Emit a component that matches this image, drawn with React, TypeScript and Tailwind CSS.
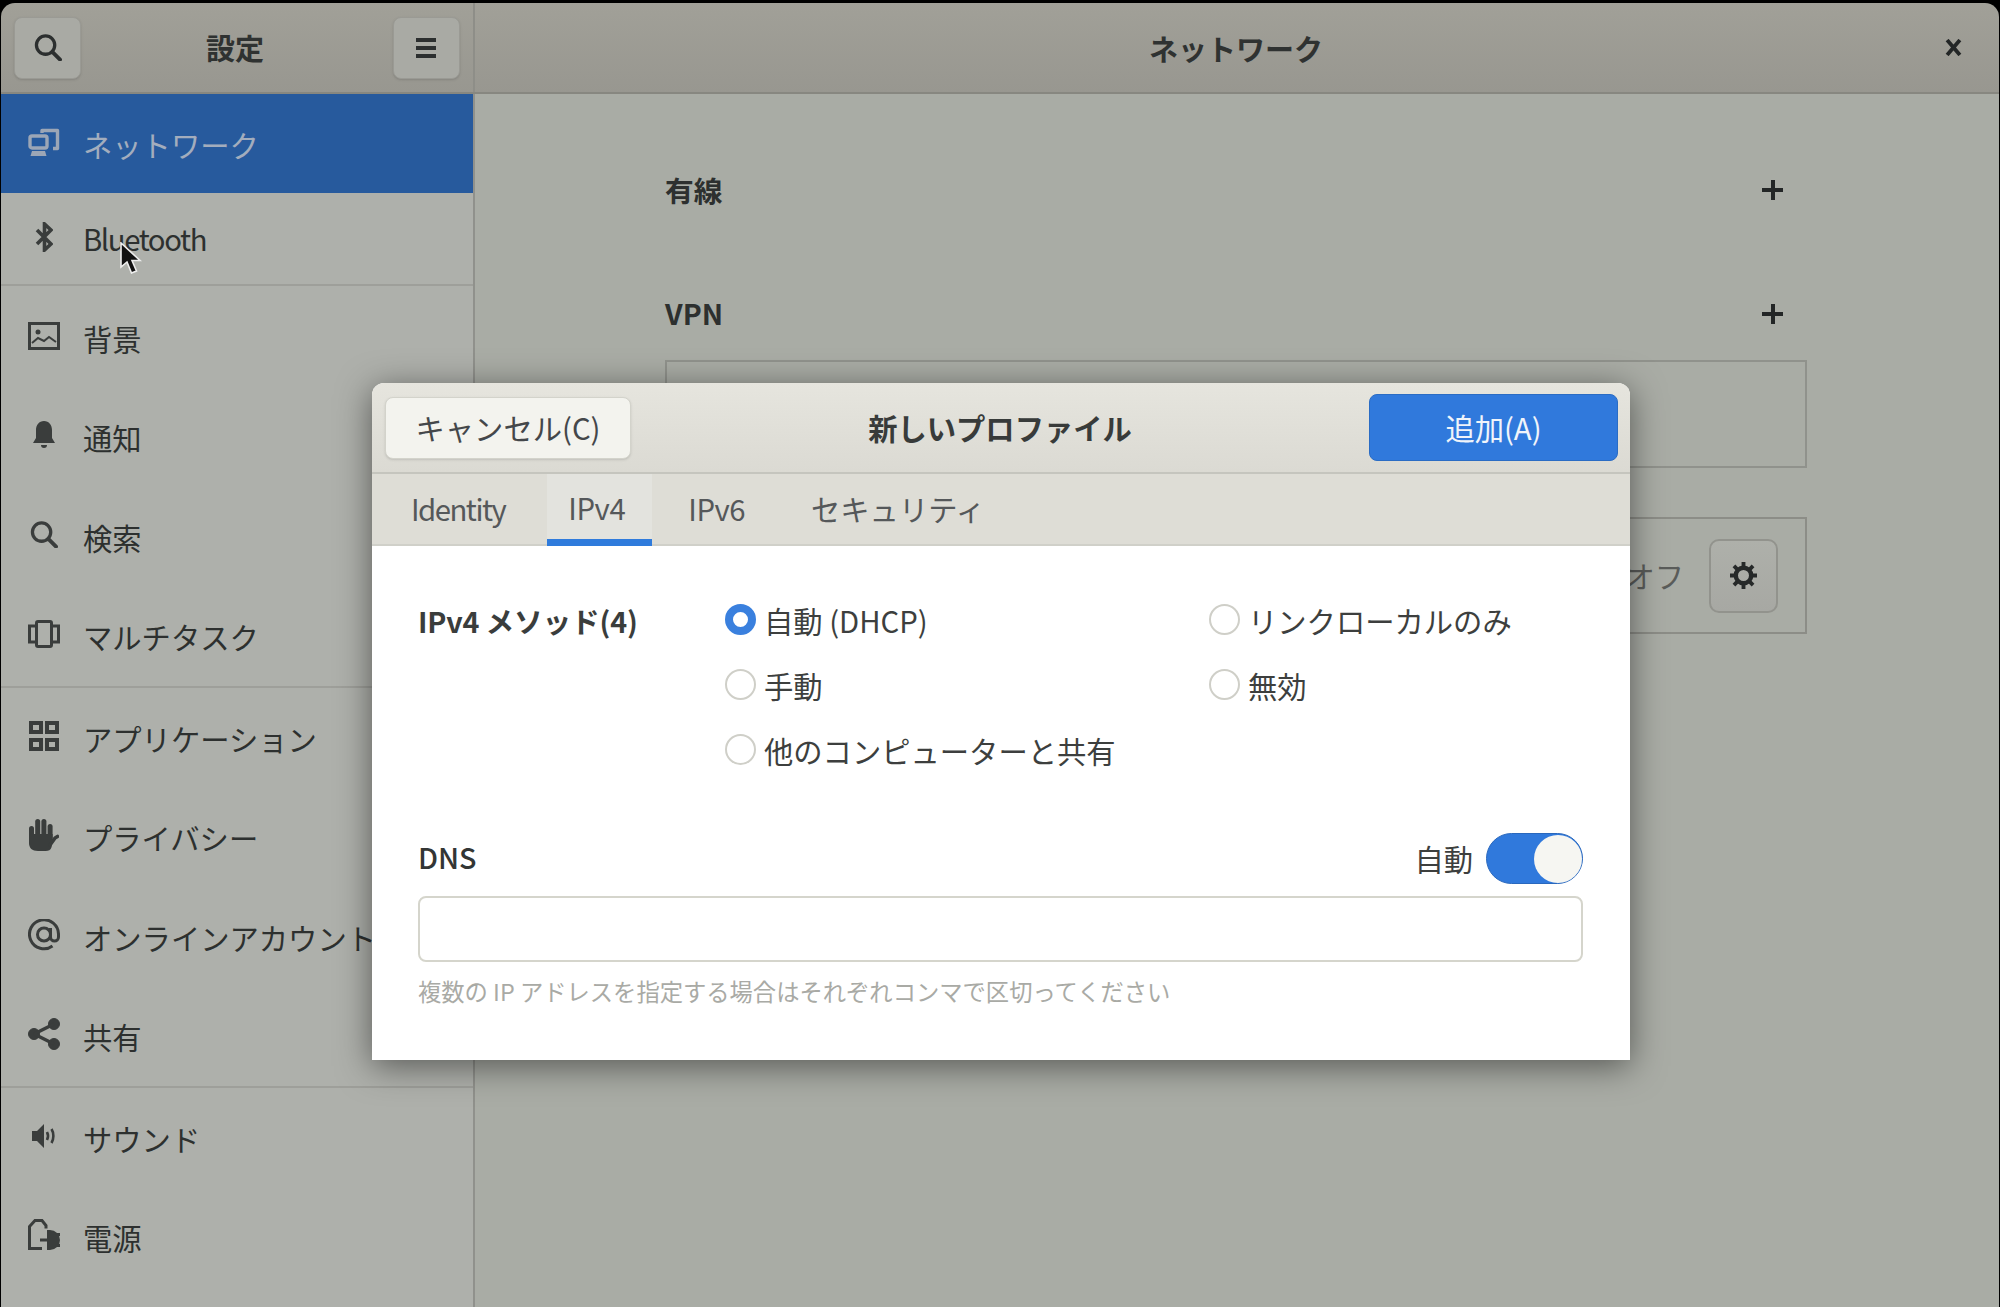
import React from "react";

type IconProps = { className?: string };

const IconNetwork = ({ className }: IconProps) => (
  <svg viewBox="0 0 32 28" className={className} fill="none" stroke="currentColor" strokeWidth="3.4">
    <path d="M14 5V2.500h15.500v18H25" strokeLinejoin="round" />
    <rect x="2" y="8" width="17" height="12" rx="2" />
    <path d="M2.500 28l1.500-5h13l1.500 5z" fill="currentColor" stroke="none" />
  </svg>
);
const IconBluetooth = ({ className }: IconProps) => (
  <svg viewBox="0 0 18 30" className={className} fill="none" stroke="currentColor" strokeWidth="3.6">
    <path d="M2 8l14 14-6.500 6V2L16 8 2 22" />
  </svg>
);
const IconImage = ({ className }: IconProps) => (
  <svg viewBox="0 0 32 28" className={className} fill="none" stroke="currentColor" strokeWidth="3">
    <rect x="1.500" y="1.500" width="29" height="25" />
    <circle cx="10" cy="10" r="2.500" fill="currentColor" stroke="none" />
    <path d="M4 21l6-5 6 3 5-4 7 5" strokeWidth="2" />
  </svg>
);
const IconBell = ({ className }: IconProps) => (
  <svg viewBox="0 0 24 30" className={className} fill="currentColor">
    <path d="M12 1c-5 0-8 4-8 9v8l-3 5h22l-3-5v-8c0-5-3-9-8-9z" />
    <path d="M9 25h6a3 3 0 01-6 0z" />
  </svg>
);
const IconSearch = ({ className }: IconProps) => (
  <svg viewBox="0 0 28 28" className={className} fill="none" stroke="currentColor" strokeWidth="3.400">
    <circle cx="11.500" cy="11.500" r="9.500" />
    <path d="M18.500 18.500l8 8" strokeLinecap="round" strokeWidth="4" />
  </svg>
);
const IconMulti = ({ className }: IconProps) => (
  <svg viewBox="0 0 32 28" className={className} fill="none" stroke="currentColor" strokeWidth="3">
    <rect x="8.500" y="1.500" width="15" height="25" rx="1.500" />
    <path d="M8 6H1.500v16H8M24 6h6.500v16H24" />
  </svg>
);
const IconApps = ({ className }: IconProps) => (
  <svg viewBox="0 0 30 30" className={className} fill="none" stroke="currentColor" strokeWidth="4">
    <rect x="2" y="2" width="10" height="9" />
    <rect x="18" y="2" width="10" height="9" />
    <rect x="2" y="19" width="10" height="9" />
    <rect x="18" y="19" width="10" height="9" />
  </svg>
);
const IconHand = ({ className }: IconProps) => (
  <svg viewBox="0 0 30 32" className={className} fill="currentColor">
    <rect x="0" y="7" width="5" height="18" rx="2.500" />
    <rect x="6.200" y="0" width="5" height="20" rx="2.500" />
    <rect x="12.400" y="0" width="5" height="20" rx="2.500" />
    <rect x="18.600" y="5" width="5" height="16" rx="2.500" />
    <path d="M0 15h23.600v6l-1 7c-1 3-3 4-6 4H9c-6 0-9-3-9-8z" />
    <path d="M21 26l5-7 2.500-1.500" fill="none" stroke="currentColor" strokeWidth="3.600" strokeLinecap="round" />
  </svg>
);
const IconAt = ({ className }: IconProps) => (
  <svg viewBox="0 0 32 32" className={className} fill="none" stroke="currentColor" strokeWidth="3">
    <circle cx="16" cy="15.500" r="6.500" />
    <path d="M22.500 9v9a4 4 0 008 0v-2.500a14.500 14.500 0 10-6 11.500" />
  </svg>
);
const IconShare = ({ className }: IconProps) => (
  <svg viewBox="0 0 32 32" className={className} fill="currentColor" stroke="currentColor">
    <circle cx="6" cy="16" r="5.500" />
    <circle cx="26" cy="6" r="5.500" />
    <circle cx="26" cy="26" r="5.500" />
    <path d="M6 16L26 6M6 16l20 10" strokeWidth="3.500" />
  </svg>
);
const IconSound = ({ className }: IconProps) => (
  <svg viewBox="0 0 24 24" className={className} fill="none" stroke="currentColor">
    <path d="M0 7h5l7-7v24l-7-7H0z" fill="currentColor" stroke="none" />
    <path d="M15 8c1.300 2.500 1.300 5.500 0 8M19.500 5c2.500 4 2.500 10 0 14" strokeWidth="2.600" />
  </svg>
);
const IconPower = ({ className }: IconProps) => (
  <svg viewBox="0 0 32 32" className={className} fill="none" stroke="currentColor" strokeWidth="3">
    <path d="M14 29.500H1.500V7.500L7 1.500h7l4 5v3" />
    <path d="M19 11h3a9.500 9.500 0 010 20h-3z" fill="currentColor" stroke="none" />
    <path d="M12 21h7M27 15.500h5M27 26.500h5" />
  </svg>
);
const IconGear = ({ className }: IconProps) => (
  <svg viewBox="0 0 28 28" className={className} fill="none" stroke="currentColor">
    <circle cx="14" cy="14" r="8" strokeWidth="4.600" />
    <path d="M14 0v5M14 23v5M0 14h5M23 14h5M4.100 4.100l3.500 3.500M23.900 4.100l-3.500 3.500M4.100 23.900l3.500-3.500M23.900 23.900l-3.500-3.500" strokeWidth="4" />
  </svg>
);

const iconBox = "flex h-[34px] w-[34px] shrink-0 -translate-y-[2px] items-center justify-center text-[#3a3d3c]";

const Row = ({ icon, label }: { icon: React.ReactNode; label: string }) => (
  <div className="flex h-[99.5px] items-center gap-[22px] pl-[26px]">
    <div className={iconBox}>{icon}</div>
    <span className="mt-[2px] whitespace-nowrap text-[29.3px] text-[#2d302f]">{label}</span>
  </div>
);

const Radio = ({ checked, label }: { checked?: boolean; label: string }) => (
  <div className="flex h-[65px] items-center gap-[8px]">
    <span
      className={
        checked
          ? "mb-[6px] h-[31px] w-[31px] shrink-0 rounded-full border-[8px] border-[#3a80de] bg-white"
          : "mb-[6px] h-[31px] w-[31px] shrink-0 rounded-full border-2 border-[#cfcfc8] bg-white"
      }
    />
    <span className="mb-[4px] whitespace-nowrap text-[29.3px] text-[#3d3f3e]">{label}</span>
  </div>
);

const Plus = ({ className }: IconProps) => (
  <span className={className}>
    <span className="absolute left-0 top-[8px] h-[4px] w-[21px] bg-[#232626]" />
    <span className="absolute left-[9px] top-0 h-[20px] w-[4px] bg-[#232626]" />
  </span>
);

export default function App() {
  return (
    <div className="relative h-[1307px] w-[2000px] overflow-hidden bg-black pl-[1px] pr-[1px] pt-[3px] font-['Noto_Sans_CJK_JP','Noto_Sans',sans-serif]">
      <div className="flex h-[1304px] flex-col overflow-hidden rounded-t-[14px]">
        <header className="flex h-[91px] shrink-0 border-b-2 border-[#878780] bg-gradient-to-b from-[#a1a098] to-[#989790]">
          <div className="flex w-[474px] shrink-0 items-center justify-between border-r-2 border-[#8e8e88] pl-[13px] pr-[13px]">
            <div className="flex h-[62px] w-[67px] items-center justify-center rounded-[8px] border border-[#9a9a94] bg-[#a9aaa4] shadow-sm">
              <IconSearch className="h-[27px] w-[28px] text-[#2c2f2f]" />
            </div>
            <span className="mr-[4px] pt-[1px] text-[29px] font-bold text-[#2f3231]">設定</span>
            <div className="flex h-[62px] w-[67px] items-center justify-center rounded-[8px] border border-[#9a9a94] bg-[#a9aaa4] shadow-sm">
              <div className="flex w-[20px] flex-col gap-[4px]">
                <span className="h-[4px] bg-[#2c2f2f]" />
                <span className="h-[4px] bg-[#2c2f2f]" />
                <span className="h-[4px] bg-[#2c2f2f]" />
              </div>
            </div>
          </div>
          <div className="flex flex-1 items-center justify-between pl-[674px] pr-[37px]">
            <span className="pt-[2px] text-[29px] font-bold text-[#2f3231]">ネットワーク</span>
            <svg viewBox="0 0 16 16" className="h-[17px] w-[17px]" stroke="#232626" strokeWidth="3.600" fill="none">
              <path d="M2 1l12 14M14 1L2 15" />
            </svg>
          </div>
        </header>

        <div className="flex min-h-0 flex-1">
          <aside className="w-[474px] shrink-0 border-r-2 border-[#90918c] bg-[#aeb0ab]">
            <div className="flex h-[99px] items-center gap-[22px] bg-[#275a9d] pl-[26px]">
              <div className="flex h-[34px] w-[34px] shrink-0 -translate-y-[2px] items-center justify-center text-[#9ca6b6]">
                <IconNetwork className="h-[28px] w-[32px]" />
              </div>
              <span className="mt-[2px] whitespace-nowrap text-[29.3px] text-[#a3adbd]">ネットワーク</span>
            </div>
            <div className="flex h-[93px] items-center gap-[22px] border-b-2 border-[#9e9f9a] pl-[26px]">
              <div className={iconBox}>
                <IconBluetooth className="h-[30px] w-[18px]" />
              </div>
              <span className="text-[29.3px] tracking-[-1.4px] text-[#2d302f]">Bluetooth</span>
            </div>
            <div className="border-b-2 border-[#9e9f9a] pt-[2px]">
              <Row icon={<IconImage className="h-[28px] w-[32px]" />} label="背景" />
              <Row icon={<IconBell className="h-[30px] w-[24px]" />} label="通知" />
              <Row icon={<IconSearch className="h-[27px] w-[28px]" />} label="検索" />
              <Row icon={<IconMulti className="h-[28px] w-[32px]" />} label="マルチタスク" />
            </div>
            <div className="border-b-2 border-[#9e9f9a]">
              <Row icon={<IconApps className="h-[30px] w-[30px]" />} label="アプリケーション" />
              <Row icon={<IconHand className="h-[32px] w-[30px]" />} label="プライバシー" />
              <Row icon={<IconAt className="h-[32px] w-[32px]" />} label="オンラインアカウント" />
              <Row icon={<IconShare className="h-[32px] w-[32px]" />} label="共有" />
            </div>
            <Row icon={<IconSound className="h-[24px] w-[24px]" />} label="サウンド" />
            <Row icon={<IconPower className="h-[32px] w-[32px]" />} label="電源" />
          </aside>

          <main className="min-w-0 flex-1 bg-[#a9aca5] pl-[190px] pr-[192px] pt-[68px] text-[#2d302f]">
            <div className="flex h-[56px] items-center justify-between pr-[24px]">
              <span className="text-[28.7px] font-bold">有線</span>
              <Plus className="relative h-[20px] w-[21px]" />
            </div>
            <div className="mt-[67px] flex h-[56px] items-center justify-between pr-[24px]">
              <span className="text-[28.5px] font-bold">VPN</span>
              <Plus className="relative mt-[2px] h-[20px] w-[21px]" />
            </div>
            <div className="mt-[19px] h-[108px] border-2 border-[#90928c]" />
            <div className="mt-[49px] flex h-[117px] items-center justify-end border-2 border-[#8c8d87] pr-[27px]">
              <span className="mr-[25px] text-[29.3px] text-[#5a5c5a]">オフ</span>
              <div className="flex h-[74px] w-[69px] items-center justify-center rounded-[10px] border-2 border-[#92938d] bg-gradient-to-b from-[#aeb0aa] to-[#a7a8a3]">
                <IconGear className="h-[27px] w-[27px] text-[#262929]" />
              </div>
            </div>
          </main>
        </div>
      </div>

      {/* dialog */}
      <div className="absolute left-[372px] top-[383px] flex h-[677px] w-[1258px] flex-col rounded-t-[12px] bg-white shadow-[0_6px_34px_rgba(0,0,0,0.5)]">
        <div className="flex h-[91px] shrink-0 items-center justify-between rounded-t-[12px] border-b-2 border-[#c5c5be] bg-gradient-to-b from-[#e6e5de] to-[#dbdad3] pl-[13px] pr-[12px]">
          <div className="flex h-[62px] w-[246px] items-center justify-center rounded-[8px] border border-[#d3d3cb] bg-[#f3f3ee] text-[29.3px] text-[#44474a] shadow-sm">
            キャンセル(C)
          </div>
          <span className="text-[29.3px] font-bold text-[#383b3a]">新しいプロファイル</span>
          <div className="flex h-[67px] w-[249px] items-center justify-center rounded-[8px] border border-[#2a6cc4] bg-[#3079dc] text-[29.3px] text-[#f0f4fa]">
            追加(A)
          </div>
        </div>
        <div className="flex h-[72px] shrink-0 gap-[14px] border-b-2 border-[#d0d0c9] bg-[#deddd6] pl-[14px] text-[29.3px] text-[#55585a]">
          <div className="flex h-[72px] items-center px-[25px] pb-[2px] tracking-[-1.5px]">Identity</div>
          <div className="ml-[3px] flex h-[72px] items-center border-b-[7px] border-[#2f7bdc] bg-[#e3e3de] pl-[21px] pr-[27px] pt-[2px] tracking-[-0.4px]">IPv4</div>
          <div className="-ml-[3px] flex h-[72px] items-center px-[25px] pb-[2px] tracking-[-0.5px]">IPv6</div>
          <div className="ml-[2px] flex h-[72px] items-center px-[25px] pb-[2px]">セキュリティ</div>
        </div>
        <div className="flex-1 pl-[46px] pr-[47px] pt-[44px]">
          <div className="flex">
            <div className="mb-[3px] flex h-[62px] w-[307px] shrink-0 items-center text-[28.7px] font-bold tracking-[-0.2px] text-[#3a3d3c]">
              IPv4 メソッド(4)
            </div>
            <div className="grid flex-1 grid-cols-[484px_1fr]">
              <Radio checked label="自動 (DHCP)" />
              <Radio label="リンクローカルのみ" />
              <Radio label="手動" />
              <Radio label="無効" />
              <Radio label="他のコンピューターと共有" />
            </div>
          </div>
          <div className="mt-[48px] flex h-[51px] items-center justify-between">
            <span className="mb-[4px] text-[28.7px] font-medium text-[#333635]">DNS</span>
            <div className="flex items-center gap-[13px]">
              <span className="text-[29.3px] text-[#3d3f3e]">自動</span>
              <div className="flex h-[51px] w-[97px] items-center justify-end rounded-full border border-[#2a68bd] bg-[#3079dc]">
                <div className="h-[48px] w-[48px] rounded-full bg-[#f6f6f2]" />
              </div>
            </div>
          </div>
          <div className="mt-[12px] h-[66px] rounded-[8px] border-2 border-[#d5d5cc] bg-white" />
          <div className="mt-[12px] whitespace-nowrap text-[23.3px] leading-[34px] text-[#a9aaa5]">
            複数の IP アドレスを指定する場合はそれぞれコンマで区切ってください
          </div>
        </div>
      </div>

      {/* mouse cursor */}
      <svg viewBox="0 0 24 33" className="absolute left-[120px] top-[242px] h-[33px] w-[24px]">
        <path d="M1 1v24l6-5 4.500 11 5-2-4.500-10.500H20z" fill="#111" stroke="#eee" strokeWidth="1.600" />
      </svg>
    </div>
  );
}
